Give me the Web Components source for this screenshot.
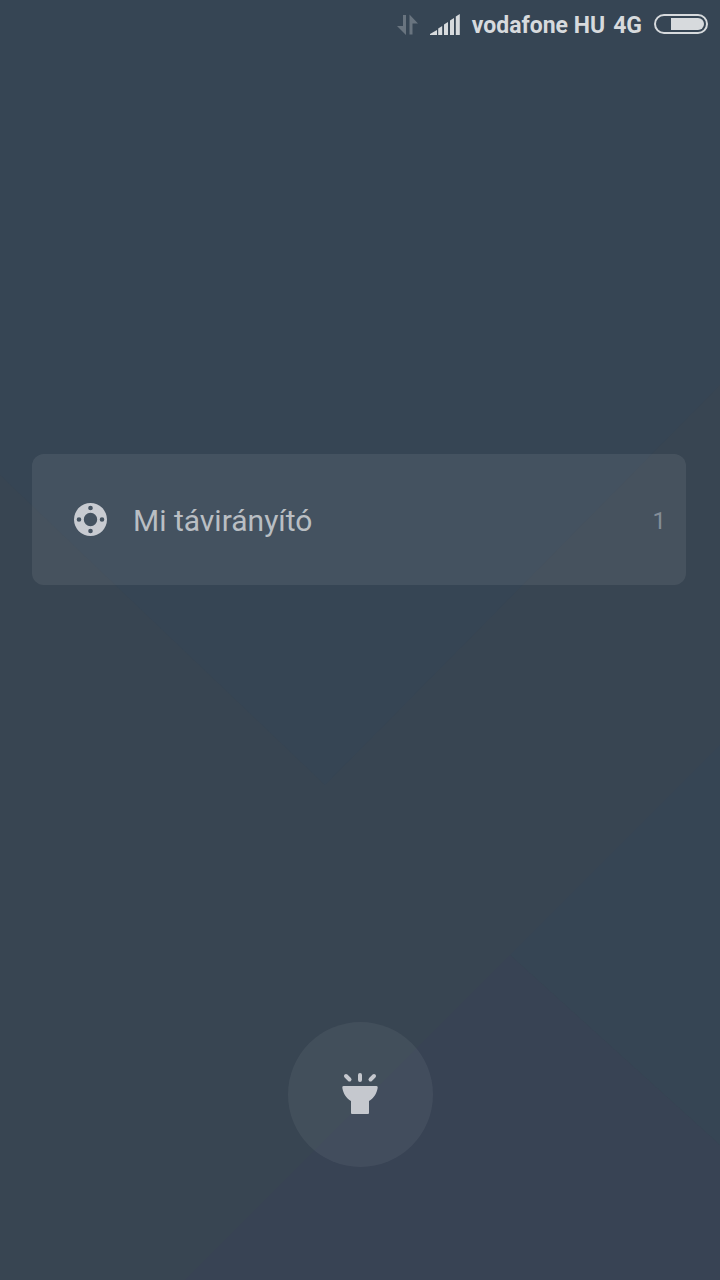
<!DOCTYPE html>
<html lang="hu">
  <head>
    <meta charset="utf-8" />
    <meta name="viewport" content="width=device-width, initial-scale=1">
    <title>Lock screen</title>
    <style>
      html, body {
        margin: 0;
        background: #384552;
      }
      body {
        font-family: Roboto, "Noto Sans", sans-serif;
      }
    </style>
  </head>
  <body>
    <lock-screen>
      <status-bar slot="status" network="4G">vodafone HU</status-bar>
      <notification-card count="1">Mi távirányító</notification-card>
      <torch-button slot="shortcut" label="Zseblámpa"></torch-button>
    </lock-screen>

    <template id="lock-screen">
      <style>
        :host {
          position: relative;
          isolation: isolate;
          display: flex;
          flex-direction: column;
          min-height: 100vh;
        }
        .wallpaper {
          position: absolute;
          inset: 0;
          z-index: -1;
          width: 100%;
          height: 100%;
        }
        main {
          flex: 1;
          display: flex;
          flex-direction: column;
          justify-content: center;
          gap: 12px;
          padding: 0 34px 32px 32px;
        }
        footer {
          display: flex;
          justify-content: center;
          padding-bottom: 113px;
        }
      </style>
      <svg class="wallpaper" viewBox="0 0 720 1280" preserveAspectRatio="none" aria-hidden="true">
        <rect width="720" height="1280" fill="#384552" />
        <path fill="#364554" d="M0 0H720V385L325 785L0 475Z" />
        <path fill="#364554" d="M720 745L510 955L720 1145Z" />
        <path fill="#384354" d="M510 955L720 1145V1280H185Z" />
      </svg>
      <slot name="status"></slot>
      <main><slot></slot></main>
      <footer><slot name="shortcut"></slot></footer>
    </template>

    <template id="status-bar">
      <style>
        :host {
          display: flex;
          align-items: center;
          justify-content: flex-end;
          height: 48px;
          padding: 0 12px;
          box-sizing: border-box;
          color: #d7dadd;
          font-size: 23px;
          font-weight: 700;
          line-height: 28px;
          white-space: nowrap;
        }
        svg {
          display: block;
          flex: none;
        }
        span {
          padding-top: 4px;
        }
        .signal {
          margin: 0 12px;
        }
        .network {
          margin: 0 12px 0 8px;
        }
      </style>
      <svg width="21" height="21" viewBox="0 0 21 21" fill="#69747f" aria-hidden="true">
        <path d="M6 1H9V21L0 12H6Z" />
        <path d="M12.5 20.5H15.5V9.5H21L12.5 .5Z" />
      </svg>
      <svg class="signal" width="30" height="21" viewBox="0 0 30 21" fill="currentColor" aria-hidden="true">
        <path d="M0 21V20L7 16V21Z" />
        <path d="M8.2 21V14.5L12.2 12V21Z" />
        <path d="M14 21V10.5L18 8V21Z" />
        <path d="M20 21V6.5L24 4V21Z" />
        <path d="M25.8 21V2.5L29.8 0V21Z" />
      </svg>
      <span><slot></slot></span>
      <span class="network"></span>
      <svg width="54" height="20" viewBox="0 0 54 20" aria-hidden="true">
        <rect x="1" y="1" width="52" height="18" rx="9" fill="none" stroke="currentColor" stroke-width="2" />
        <path d="M17 4H44A6 6 0 0 1 44 16H17Z" fill="currentColor" />
      </svg>
    </template>

    <template id="notification-card">
      <style>
        :host {
          display: block;
        }
        a {
          display: flex;
          align-items: center;
          height: 131px;
          box-sizing: border-box;
          padding: 0 20px 0 42px;
          border-radius: 12px;
          background: rgba(255, 255, 255, .075);
          color: #b9bec3;
          text-decoration: none;
        }
        svg {
          flex: none;
          margin-right: 26px;
        }
        span {
          padding-top: 4px;
          line-height: 36px;
        }
        .title {
          flex: 1;
          font-size: 30px;
        }
        .count {
          color: #848d97;
          font-size: 24px;
        }
      </style>
      <a href="#">
        <svg width="33" height="33" viewBox="0 0 33 33" aria-hidden="true">
          <path fill="#c8cbd1" fill-rule="evenodd" d="M16.5 0a16.5 16.5 0 1 1 0 33a16.5 16.5 0 1 1 0-33Z
            M16.5 9.8a6.7 6.7 0 1 0 0 13.4a6.7 6.7 0 1 0 0-13.4Z
            M16.5 2.7a2.3 2.3 0 1 0 0 4.6a2.3 2.3 0 1 0 0-4.6Z
            M16.5 25.7a2.3 2.3 0 1 0 0 4.6a2.3 2.3 0 1 0 0-4.6Z
            M5 14.2a2.3 2.3 0 1 0 0 4.6a2.3 2.3 0 1 0 0-4.6Z
            M28 14.2a2.3 2.3 0 1 0 0 4.6a2.3 2.3 0 1 0 0-4.6Z" />
        </svg>
        <span class="title"><slot></slot></span>
        <span class="count"></span>
      </a>
    </template>

    <template id="torch-button">
      <style>
        :host {
          display: block;
        }
        button {
          display: grid;
          place-items: center;
          width: 145px;
          height: 145px;
          padding: 0;
          border: 0;
          border-radius: 50%;
          background: rgba(255, 255, 255, .055);
          color: #c5c8ce;
        }
      </style>
      <button type="button">
        <svg width="36" height="44" viewBox="0 0 36 44" aria-hidden="true">
          <path fill="currentColor" d="M1.5 13H34.5Q36 13 35.7 14.8C34.7 21 31.5 25.5 27 28V40Q27 41 26 41H10Q9 41 9 40V28C4.5 25.5 1.3 21 .3 14.8Q0 13 1.5 13Z" />
          <path fill="none" stroke="currentColor" stroke-width="4" stroke-linecap="round" d="M4 3L7.5 6.5M18 2V7M32 3L28.5 6.5" />
        </svg>
      </button>
    </template>

    <script>
      class BaseElement extends HTMLElement {
        constructor() {
          super()
          const template = document.getElementById(this.localName)
          this.attachShadow({ mode: "open" })
          this.shadowRoot.appendChild(template.content.cloneNode(true))
        }
      }

      class LockScreen extends BaseElement {}

      class StatusBar extends BaseElement {
        connectedCallback() {
          this.shadowRoot.querySelector(".network").textContent = this.getAttribute("network")
        }
      }

      class NotificationCard extends BaseElement {
        connectedCallback() {
          this.shadowRoot.querySelector(".count").textContent = this.getAttribute("count")
        }
      }

      class TorchButton extends BaseElement {
        connectedCallback() {
          this.shadowRoot.querySelector("button").setAttribute("aria-label", this.getAttribute("label"))
        }
      }

      customElements.define("lock-screen", LockScreen)
      customElements.define("status-bar", StatusBar)
      customElements.define("notification-card", NotificationCard)
      customElements.define("torch-button", TorchButton)
    </script>
  </body>
</html>
